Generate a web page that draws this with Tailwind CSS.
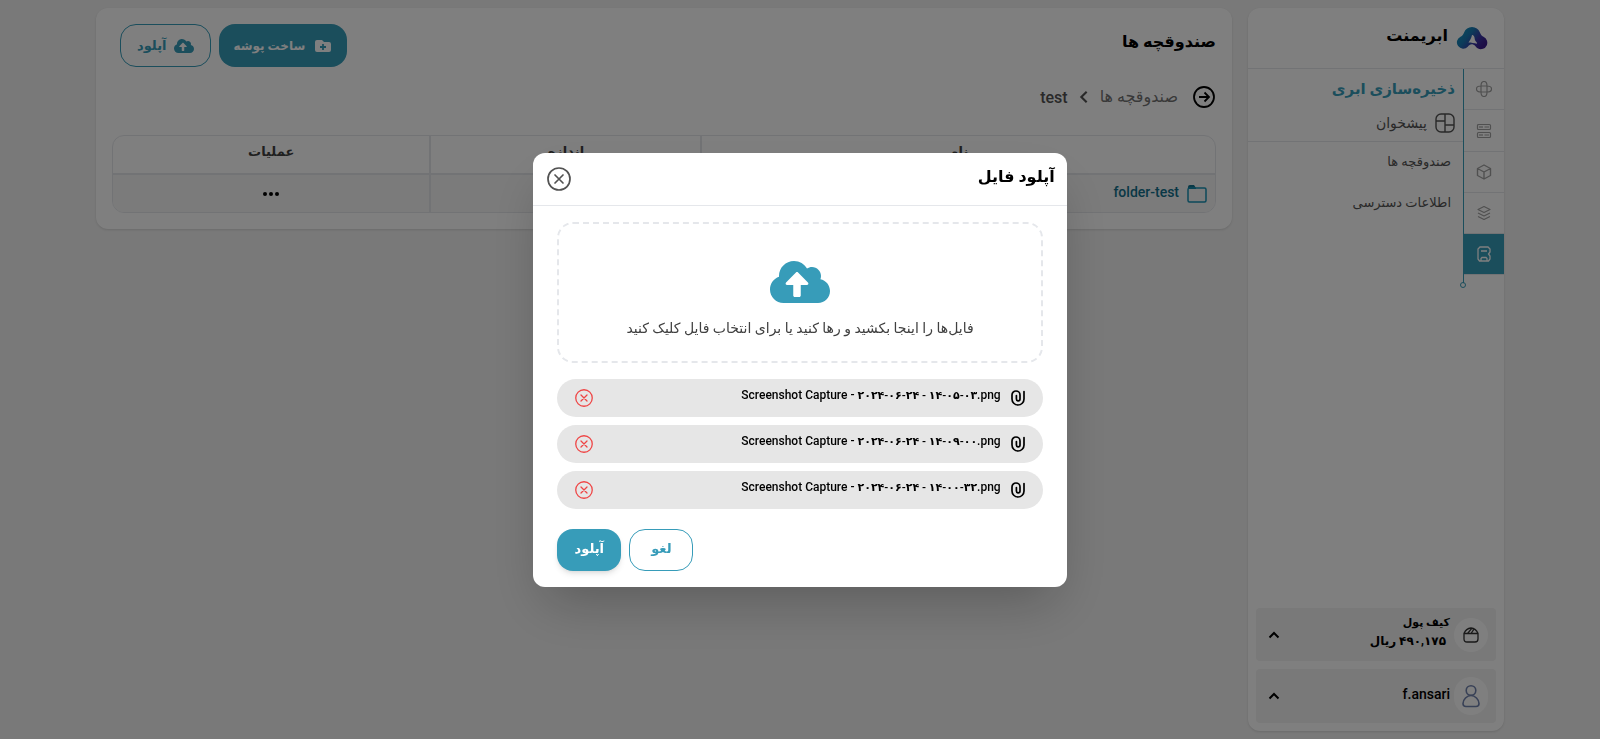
<!DOCTYPE html>
<html lang="fa" dir="rtl">
<head>
<meta charset="utf-8">
<meta name="viewport" content="width=device-width, initial-scale=1">
<title>ابریمنت - صندوقچه ها</title>
<script src="https://cdn.jsdelivr.net/npm/@tailwindcss/browser@4"></script>
</head>
<body class="min-h-screen bg-[#f3f3f3] font-['Roboto','DejaVu_Sans',sans-serif] text-sm text-black">
<svg class="hidden" aria-hidden="true">
  <symbol id="cloud" viewBox="0 0 640 512"><path fill="currentColor" d="M537.6 226.6c4.1-10.7 6.4-22.4 6.4-34.6 0-53-43-96-96-96-19.7 0-38.1 6-53.3 16.2C367 64.2 315.3 32 256 32c-88.4 0-160 71.6-160 160 0 2.7.1 5.4.2 8.1C40.2 219.8 0 273.2 0 336c0 79.5 64.5 144 144 144h368c70.7 0 128-57.3 128-128 0-61.9-44-113.6-102.4-125.4zM393.4 288H328v112c0 8.8-7.2 16-16 16h-48c-8.8 0-16-7.2-16-16V288h-65.4c-14.3 0-21.4-17.2-11.3-27.3l105.4-105.4c6.2-6.2 16.4-6.2 22.6 0l105.4 105.4c10.1 10.1 2.9 27.3-11.3 27.3z"/></symbol>
  <symbol id="close" viewBox="0 0 24 24"><g fill="none" stroke="currentColor" stroke-width="1.700" stroke-linecap="round"><circle cx="12" cy="12" r="11"/><path d="M8 8l8 8M16 8l-8 8"/></g></symbol>
  <symbol id="clip" viewBox="0 0 14 16"><path fill="none" stroke="currentColor" stroke-width="1.700" stroke-linecap="round" d="M13 1.500v7.500a6 6 0 0 1-12 0V5a4 4 0 0 1 8 0v4a1.800 1.800 0 0 1-3.600 0V5.500"/></symbol>
  <symbol id="up" viewBox="0 0 12 12"><path fill="none" stroke="currentColor" stroke-width="2" d="M1.500 8.500L6 4l4.500 4.500"/></symbol>
</svg>

<div class="flex h-screen items-start gap-4 px-24 py-2">
  <aside class="flex h-full w-64 shrink-0 flex-col rounded-xl bg-white shadow-sm">
    <header class="flex h-15 shrink-0 items-center gap-2 px-4">
      <svg class="h-6 w-8" viewBox="0 0 32 24">
        <defs><linearGradient id="brand" x1="0" y1="0" x2="1" y2="0.600"><stop offset="0" stop-color="#12a0bd"/><stop offset=".45" stop-color="#1878b4"/><stop offset=".75" stop-color="#3a35a5"/><stop offset="1" stop-color="#3b1b8c"/></linearGradient></defs>
        <path fill="url(#brand)" d="M16 1c3.800 0 6.500 2.200 7.800 5.200 1 2.400 1.600 3.300 3.700 4.500A6.300 6.300 0 1 1 22 22.600c-1.800-1.200-2.600-3.400-5-4.200-2.400-.6-3.900.8-5.200 2.300A6.300 6.300 0 1 1 4.500 10.700c2.100-1.200 2.700-2.100 3.700-4.500C9.500 3.200 12.200 1 16 1z"/>
        <path fill="#fff" d="M16 9c-.5 3-2 5-3.500 7.500 3 .8 5.500.3 8.500 1.300l-.2-1.300c-1.800-1.500-2-3-2.300-5C18 9.500 16.800 9 16 9z"/>
      </svg>
      <h1 class="pb-1 text-base font-bold leading-6">ابریمنت</h1>
    </header>
    <div class="flex flex-1 items-start border-t border-gray-200">
      <nav class="w-10 shrink-0 text-neutral-400" aria-label="محصولات">
        <a href="#" aria-label="شبکه" class="flex h-10 items-center justify-center"><svg class="size-4" viewBox="0 0 16 16" fill="none" stroke="currentColor" stroke-width="1.200"><path d="M5 5q0-4.500 3-4.500T11 5v6q0 4.500-3 4.500T5 11zM5 5h6q4.500 0 4.500 3T11 11H5Q.5 11 .5 8T5 5z"/></svg></a>
        <a href="#" aria-label="سرور" class="box-content flex h-[41px] items-center justify-center border-t border-gray-200"><svg class="size-4" viewBox="0 0 16 16" fill="none" stroke="currentColor" stroke-width="1.200"><rect x="1.500" y="1.500" width="13" height="5" rx="1"/><rect x="1.500" y="9.500" width="13" height="5" rx="1"/><path d="M4 3v2M6 3v2M8.500 4H13M4 11v2M6 11v2M8.500 12H13"/></svg></a>
        <a href="#" aria-label="کانتینر" class="box-content flex h-10 items-center justify-center border-t border-gray-200"><svg class="size-4" viewBox="0 0 16 16" fill="none" stroke="currentColor" stroke-width="1.400" stroke-linejoin="round"><path d="M8 1l6.500 3.500v7L8 15l-6.500-3.500v-7zM1.500 4.500L8 8l6.500-3.500M8 8v7"/></svg></a>
        <a href="#" aria-label="لایه‌ها" class="box-content flex h-10 items-center justify-center border-t border-gray-200"><svg class="size-4" viewBox="0 0 16 16" fill="none" stroke="currentColor" stroke-width="1.200" stroke-linejoin="round"><path d="M8 1.500l6 3-6 3-6-3zM2 8l6 3 6-3M2 11.500l6 3 6-3"/></svg></a>
        <a href="#" aria-label="ذخیره‌سازی" class="box-content flex h-10 items-center justify-center border-y border-gray-200 bg-[#379cb9] bg-clip-padding text-white"><svg class="size-4" viewBox="0 0 16 16" fill="none" stroke="currentColor" stroke-width="1.300"><path d="M4 1h8l2 2v3l-1.500 2L14 10v3l-1.500 2h-9L2 13V3zM5 5h6M5 15v-2.500l1-1h4l1 1V15"/></svg></a>
      </nav>
      <div class="relative h-54 w-px shrink-0 bg-[#379cb9]"><span class="absolute -bottom-0.5 -left-0.5 size-1 rounded-full bg-white outline outline-[#379cb9]"></span></div>
      <div class="flex-1">
        <div class="border-b border-gray-200 p-2">
          <h2 class="text-[15px] leading-6 font-bold text-[#379cb9]">ذخیره‌سازی ابری</h2>
          <a href="#" class="mt-3 flex h-5 items-center gap-2 leading-5 text-neutral-600">
            <svg class="size-5" viewBox="0 0 20 20" fill="none" stroke="currentColor" stroke-width="1.400"><rect x="1" y="1" width="18" height="18" rx="5"/><path d="M10 1v18M1 8h9M10 12h9"/></svg>
            <span>پیشخوان</span>
          </a>
        </div>
        <a href="#" class="flex h-[41px] items-center px-3 text-[13px] text-neutral-600">صندوقچه ها</a>
        <a href="#" class="flex h-[41px] items-center px-3 text-[13px] text-neutral-600">اطلاعات دسترسی</a>
      </div>
    </div>
    <div class="flex flex-col gap-2 p-2">
      <button class="flex h-[53px] items-center gap-1 rounded bg-[#f3f3f3] px-2 text-start">
        <span class="flex size-8.5 items-center justify-center rounded-full bg-white"><svg class="size-4" viewBox="0 0 16 16" fill="none" stroke="#333" stroke-width="1.300"><path d="M1 6.500h14V12q0 3-3 3H4q-3 0-3-3zM1 6.500q2-5 7-5.500 5 .5 7 5.500M4.500 6.500L9 1.200M8 6.500l3-4.300"/></svg></span>
        <span class="flex-1 pb-1 font-bold"><span class="block text-[11px] leading-4">کیف پول</span><span class="block px-1 text-xs leading-5">۴۹۰,۱۷۵ ریال</span></span>
        <svg class="ml-1 size-3"><use href="#up"/></svg>
      </button>
      <button class="flex h-[54px] items-center gap-1 rounded bg-[#f3f3f3] px-2 text-start">
        <span class="flex h-9.5 w-8.5 items-center justify-center rounded-full bg-white"><svg class="h-6 w-5" viewBox="0 0 20 24" fill="none" stroke="#7182ad" stroke-width="1.600"><circle cx="10" cy="6.500" r="4.800"/><path d="M10 11.500c4 0 8 4 8 8q0 3-3 3H5q-3 0-3-3c0-4 4-8 8-8z"/></svg></span>
        <span class="flex-1 pb-1 font-medium">f.ansari</span>
        <svg class="ml-1 size-3"><use href="#up"/></svg>
      </button>
    </div>
  </aside>

  <main class="min-w-0 flex-1 rounded-xl bg-white p-4 shadow">
    <div class="flex items-start justify-between">
      <h2 class="pt-1 text-base leading-7 font-bold">صندوقچه ها</h2>
      <div class="flex gap-2 pl-2 text-xs font-bold">
        <button class="flex h-[43px] items-center gap-2 rounded-2xl bg-[#379cb9] px-3.5 text-white"><svg class="size-5" viewBox="0 0 20 20"><path fill="currentColor" d="M2 6a2 2 0 0 1 2-2h5l2 2h5a2 2 0 0 1 2 2v6a2 2 0 0 1-2 2H4a2 2 0 0 1-2-2z"/><path stroke="#379cb9" stroke-width="1.800" d="M7 11h6M10 8v6"/></svg>ساخت پوشه</button>
        <button class="flex h-[43px] items-center gap-2 rounded-2xl border border-[#379cb9] px-4 text-[#379cb9]"><svg class="h-4 w-5"><use href="#cloud"/></svg><span class="text-[13px]">آپلود</span></button>
      </div>
    </div>
    <nav class="mt-4.5 flex h-6 items-center text-base text-neutral-500" aria-label="مسیر">
      <button aria-label="بازگشت" class="text-black"><svg class="size-6" viewBox="0 0 24 24" fill="none" stroke="currentColor" stroke-width="1.800"><circle cx="12" cy="12" r="10"/><path d="M7 12h10M12.500 7.500L17 12l-4.500 4.500"/></svg></button>
      <a href="#" class="ms-3.5 me-2">صندوقچه ها</a>
      <svg class="size-4 text-neutral-600" viewBox="0 0 12 12"><path fill="none" stroke="currentColor" stroke-width="1.600" d="M8 2L4 6l4 4"/></svg>
      <span class="mx-2 pt-0.5 font-medium text-neutral-600">test</span>
    </nav>
    <div class="mt-6.5 overflow-hidden rounded-xl border border-gray-200">
      <table class="w-full table-fixed border-collapse text-[13px]">
        <colgroup><col><col class="w-[24.6%]"><col class="w-[28.8%]"></colgroup>
        <thead><tr class="h-9.5 text-neutral-700"><th class="pb-1">نام</th><th class="border-r-2 border-gray-200 pb-1">اندازه</th><th class="border-r-2 border-gray-200 pb-1">عملیات</th></tr></thead>
        <tbody><tr class="h-9.5 border-t-2 border-gray-200 bg-[#f6f6f6]">
          <td class="px-2"><a href="#" class="flex items-center gap-2 text-sm font-medium text-[#12708c]"><svg class="h-5 w-5" viewBox="0 0 20 20"><path fill="currentColor" d="M1 5V3q0-2 2-2h4l2 3v1z"/><rect x="1" y="4" width="18" height="14" rx="1.500" fill="none" stroke="#1791b4" stroke-width="1.500"/></svg><span class="pb-1">folder-test</span></a></td>
          <td class="border-r-2 border-gray-200"></td>
          <td class="border-r-2 border-gray-200"><button aria-label="عملیات" class="mx-auto block"><svg class="h-1 w-4" viewBox="0 0 16 4"><circle cx="2" cy="2" r="2"/><circle cx="8" cy="2" r="2"/><circle cx="14" cy="2" r="2"/></svg></button></td>
        </tr></tbody>
      </table>
    </div>
  </main>
</div>

<div class="fixed inset-0 flex items-center justify-center bg-black/50">
  <section role="dialog" aria-modal="true" aria-labelledby="dialog-title" class="w-1/3 rounded-xl bg-white shadow-2xl">
    <header class="flex h-[53px] items-center justify-between border-b border-gray-200 px-3">
      <h2 id="dialog-title" class="pb-1 text-base leading-6 font-bold">آپلود فایل</h2>
      <button aria-label="بستن" class="px-0.5 text-neutral-600"><svg class="size-6"><use href="#close"/></svg></button>
    </header>
    <div class="px-6 py-4">
      <button class="flex h-[141px] w-full flex-col items-center justify-center gap-3 rounded-2xl border-2 border-dashed border-gray-200 pt-3 text-neutral-700">
        <svg class="h-12 w-15 text-[#379cb9]"><use href="#cloud"/></svg>
        <span>فایل‌ها را اینجا بکشید و رها کنید یا برای انتخاب فایل کلیک کنید</span>
      </button>
      <ul class="mt-4 flex flex-col gap-2 text-xs font-medium">
        <li class="flex h-9.5 items-center gap-2.5 rounded-full bg-[#e6e6e6] px-4.5"><svg class="h-4 w-3.5"><use href="#clip"/></svg><span dir="ltr" class="flex-1 pb-1 text-right">Screenshot Capture - <span class="text-[11px] font-semibold">۲۰۲۴-۰۶-۲۴ - ۱۴-۰۵-۰۳</span>.png</span><button aria-label="حذف" class="text-[#ef4444]"><svg class="size-4.5"><use href="#close"/></svg></button></li>
        <li class="flex h-9.5 items-center gap-2.5 rounded-full bg-[#e6e6e6] px-4.5"><svg class="h-4 w-3.5"><use href="#clip"/></svg><span dir="ltr" class="flex-1 pb-1 text-right">Screenshot Capture - <span class="text-[11px] font-semibold">۲۰۲۴-۰۶-۲۴ - ۱۴-۰۹-۰۰</span>.png</span><button aria-label="حذف" class="text-[#ef4444]"><svg class="size-4.5"><use href="#close"/></svg></button></li>
        <li class="flex h-9.5 items-center gap-2.5 rounded-full bg-[#e6e6e6] px-4.5"><svg class="h-4 w-3.5"><use href="#clip"/></svg><span dir="ltr" class="flex-1 pb-1 text-right">Screenshot Capture - <span class="text-[11px] font-semibold">۲۰۲۴-۰۶-۲۴ - ۱۴-۰۰-۳۲</span>.png</span><button aria-label="حذف" class="text-[#ef4444]"><svg class="size-4.5"><use href="#close"/></svg></button></li>
      </ul>
      <div class="mt-5 flex justify-end gap-2 text-[13px] font-bold">
        <button class="h-10.5 w-16 rounded-2xl border border-[#379cb9] text-[#379cb9]">لغو</button>
        <button class="h-10.5 w-16 rounded-2xl bg-[#379cb9] text-white shadow-md">آپلود</button>
      </div>
    </div>
  </section>
</div>
</body>
</html>
